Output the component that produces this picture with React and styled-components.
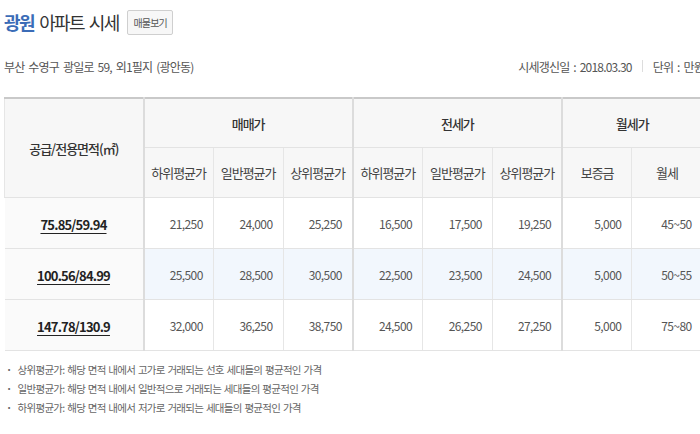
import React from 'react'
import styled, { createGlobalStyle } from 'styled-components'

const GlobalStyle = createGlobalStyle`
  body {
    margin: 0;
    background: #fff;
    font-family: 'Noto Sans CJK KR', 'Noto Sans', sans-serif;
  }
`

const Page = styled.div`
  width: 700px;
  height: 434px;
  overflow: hidden;
`

const Inner = styled.div`
  width: 700px;
  padding: 0 0 0 4px;
`

const TitleBar = styled.div`
  display: flex;
  align-items: center;
  height: 44px;
  gap: 9px;
`

const Title = styled.h2`
  margin: 0;
  font-size: 18px;
  font-weight: 400;
  color: #333;
  letter-spacing: -1.8px;
  word-spacing: 3px;

  & strong {
    color: #3b6cb7;
    font-weight: 700;
    letter-spacing: -1.5px;
  }
`

const ListButton = styled.button`
  height: 25px;
  padding: 0 5px;
  border: 1px solid #cfcfcf;
  border-radius: 2px;
  background: #f7f7f7;
  color: #555;
  font-family: inherit;
  font-size: 10px;
  letter-spacing: -0.8px;
  cursor: pointer;
  margin-top: 1px;
`

const InfoBar = styled.div`
  display: flex;
  justify-content: space-between;
  align-items: center;
  height: 44px;
  font-size: 12px;
  color: #555;
  letter-spacing: -0.8px;
  word-spacing: 2px;
`

const Meta = styled.div`
  display: flex;
  align-items: center;
  gap: 10px;
`

const Divider = styled.span`
  width: 1px;
  height: 12px;
  background: #ddd;
`

const Table = styled.table`
  width: 697px;
  border-collapse: collapse;
  table-layout: fixed;
  margin-top: 9px;
  border-top: 2px solid #c9c9c9;
  border-bottom: 1px solid #ddd;
`

const Th = styled.th`
  height: ${({ $h }) => $h || 48}px;
  background: #f7f7f7;
  font-weight: ${({ $bold }) => ($bold ? 500 : 400)};
  font-size: 13px;
  color: ${({ $bold }) => ($bold ? '#333' : '#444')};
  letter-spacing: -1px;
  text-align: center;
  padding: 0;
  border-bottom: 1px solid #e3e3e3;
  border-left: ${({ $group }) => ($group ? '2px solid #dcdcdc' : '1px solid #e6e6e6')};
`

const Row = styled.tr`
  background: ${({ $hl }) => ($hl ? '#f2f7fd' : '#fff')};
`

const AreaCell = styled.td`
  height: 50px;
  background: #fafafa;
  text-align: center;
  border-bottom: 1px solid #e3e3e3;
  padding: 0;

  & a {
    color: #222;
    font-weight: 700;
    font-size: 13px;
    text-decoration: underline;
    text-underline-offset: 3px;
    letter-spacing: -0.8px;
  }
`

const Num = styled.td`
  text-align: right;
  padding: 0 10px 0 0;
  font-size: 12px;
  color: #555;
  letter-spacing: -0.6px;
  border-bottom: 1px solid #e3e3e3;
  border-left: ${({ $group }) => ($group ? '2px solid #dcdcdc' : '1px solid #e6e6e6')};
`

const Notes = styled.ul`
  list-style: none;
  margin: 9px 0 0;
  padding: 0 0 0 2px;
`

const Note = styled.li`
  font-size: 10.5px;
  color: #666;
  line-height: 19px;
  letter-spacing: -0.7px;
  word-spacing: 1px;

  &::before {
    content: '·';
    margin-right: 6px;
    font-weight: 700;
  }
`

const rows = [
  { area: '75.85/59.94', values: ['21,250', '24,000', '25,250', '16,500', '17,500', '19,250', '5,000', '45~50'] },
  { area: '100.56/84.99', values: ['25,500', '28,500', '30,500', '22,500', '23,500', '24,500', '5,000', '50~55'], hl: true },
  { area: '147.78/130.9', values: ['32,000', '36,250', '38,750', '24,500', '26,250', '27,250', '5,000', '75~80'] },
]

const subHeads = ['하위평균가', '일반평균가', '상위평균가', '하위평균가', '일반평균가', '상위평균가', '보증금', '월세']
const groupStart = [0, 3, 6]

const App = () => {
  return (
    <Page>
      <GlobalStyle />
      <Inner>
        <TitleBar>
          <Title>
            <strong>광원</strong> 아파트 시세
          </Title>
          <ListButton>매물보기</ListButton>
        </TitleBar>
        <InfoBar>
          <span>부산 수영구 광일로 59, 외1필지 (광안동)</span>
          <Meta>
            <span>시세갱신일 : 2018.03.30</span>
            <Divider />
            <span>단위 : 만원</span>
          </Meta>
        </InfoBar>
        <Table>
          <colgroup>
            <col style={{ width: 139 }} />
            {subHeads.map((_, i) => (
              <col key={i} style={{ width: 69.75 }} />
            ))}
          </colgroup>
          <thead>
            <tr>
              <Th rowSpan={2} $bold>공급/전용면적(㎡)</Th>
              <Th colSpan={3} $bold $group>매매가</Th>
              <Th colSpan={3} $bold $group>전세가</Th>
              <Th colSpan={2} $bold $group>월세가</Th>
            </tr>
            <tr>
              {subHeads.map((h, i) => (
                <Th key={i} $h={49} $group={groupStart.includes(i)}>{h}</Th>
              ))}
            </tr>
          </thead>
          <tbody>
            {rows.map((r) => (
              <Row key={r.area} $hl={r.hl}>
                <AreaCell>
                  <a href="#">{r.area}</a>
                </AreaCell>
                {r.values.map((v, i) => (
                  <Num key={i} $group={groupStart.includes(i)}>{v}</Num>
                ))}
              </Row>
            ))}
          </tbody>
        </Table>
        <Notes>
          <Note>상위평균가: 해당 면적 내에서 고가로 거래되는 선호 세대들의 평균적인 가격</Note>
          <Note>일반평균가: 해당 면적 내에서 일반적으로 거래되는 세대들의 평균적인 가격</Note>
          <Note>하위평균가: 해당 면적 내에서 저가로 거래되는 세대들의 평균적인 가격</Note>
        </Notes>
      </Inner>
    </Page>
  )
}

export default App
